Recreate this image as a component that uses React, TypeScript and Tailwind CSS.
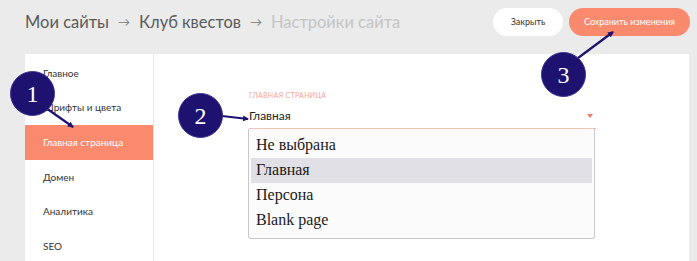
import React from 'react'

const menu = ['Главное', 'Шрифты и цвета', 'Главная страница', 'Домен', 'Аналитика', 'SEO']
const options = ['Не выбрана', 'Главная', 'Персона', 'Blank page']

function Badge({ n, className }: { n: string; className: string }) {
  return (
    <div
      className={`absolute w-[45px] h-[45px] rounded-full bg-[#1d1270] border border-[#3b3290] flex items-center justify-center text-white text-[24px] leading-none font-['Liberation_Serif',serif] ${className}`}
    >
      {n}
    </div>
  )
}

export default function App() {
  return (
    <div className="relative w-[697px] h-[261px] overflow-hidden bg-[#ebebeb] font-['Lato',sans-serif]">
      <div className="h-[54px] flex items-center pl-[25px] pr-[7px]">
        <div className="flex items-center gap-[9px] text-[16.5px] text-[#5a5a5a] pb-[10px]">
          <span>Мои сайты</span>
          <span className="text-[12px] text-[#777]">→</span>
          <span>Клуб квестов</span>
          <span className="text-[12px] text-[#777]">→</span>
          <span className="text-[#c4c4c4]">Настройки сайта</span>
        </div>
        <div className="ml-auto flex items-center gap-[6px] pb-[10px]">
          <button className="h-[28px] w-[70px] rounded-full bg-white text-[9px] text-[#333]">Закрыть</button>
          <button className="h-[28px] w-[121px] rounded-full bg-[#f98a6e] text-[9px] text-white">Сохранить изменения</button>
        </div>
      </div>

      <div className="ml-[25px] w-[664px] h-[207px] bg-white flex">
        <div className="w-[129px] border-r border-[#e8e8e8] pt-[2px]">
          {menu.map((m, i) => (
            <div
              key={m}
              className={`h-[34.6px] flex items-center pl-[18px] text-[10px] ${
                i === 2 ? 'bg-[#f98a6e] text-white' : 'text-[#333]'
              }`}
            >
              {m}
            </div>
          ))}
        </div>
        <div className="pl-[95px] pt-[36px] w-[442px]">
          <div className="text-[7px] tracking-[0.3px] text-[#f5a592]">ГЛАВНАЯ СТРАНИЦА</div>
          <div className="mt-[8px] h-[20px] flex items-start justify-between border-b border-[#f2c4b8] text-[12px] text-[#222]">
            <span className="leading-[14px]">Главная</span>
            <span className="mt-[5px] mr-[3px] w-0 h-0 border-l-[3px] border-r-[3px] border-t-[4px] border-l-transparent border-r-transparent border-t-[#f07a68]" />
          </div>
          <div className="w-[347px] -ml-[1px] border border-[#c8c8c8] border-t-0 rounded-b-[3px] bg-[#fbfbfc] px-[2px] pt-[4px] pb-[5px] font-['Liberation_Serif',serif] text-[16px] text-[#1a1a1a]">
            {options.map((o, i) => (
              <div
                key={o}
                className={`h-[25px] flex items-center pl-[5px] ${i === 1 ? 'bg-[#e1e0e6]' : ''}`}
              >
                {o}
              </div>
            ))}
          </div>
        </div>
      </div>

      <svg className="absolute inset-0 pointer-events-none" width="697" height="261">
        <defs>
          <marker id="ah" markerWidth="6" markerHeight="6" refX="5" refY="3" orient="auto" markerUnits="userSpaceOnUse">
            <path d="M0,0 L6,3 L0,6 Z" fill="#1d1270" />
          </marker>
        </defs>
        <line x1="46" y1="108" x2="73" y2="127" stroke="#1d1270" strokeWidth="2.2" markerEnd="url(#ah)" />
        <line x1="222" y1="116" x2="248" y2="119" stroke="#1d1270" strokeWidth="2.2" markerEnd="url(#ah)" />
        <line x1="578" y1="58" x2="613" y2="32" stroke="#1d1270" strokeWidth="2.2" markerEnd="url(#ah)" />
      </svg>

      <Badge n="1" className="left-[10px] top-[71px]" />
      <Badge n="2" className="left-[178px] top-[93px]" />
      <Badge n="3" className="left-[541px] top-[52px]" />
    </div>
  )
}
